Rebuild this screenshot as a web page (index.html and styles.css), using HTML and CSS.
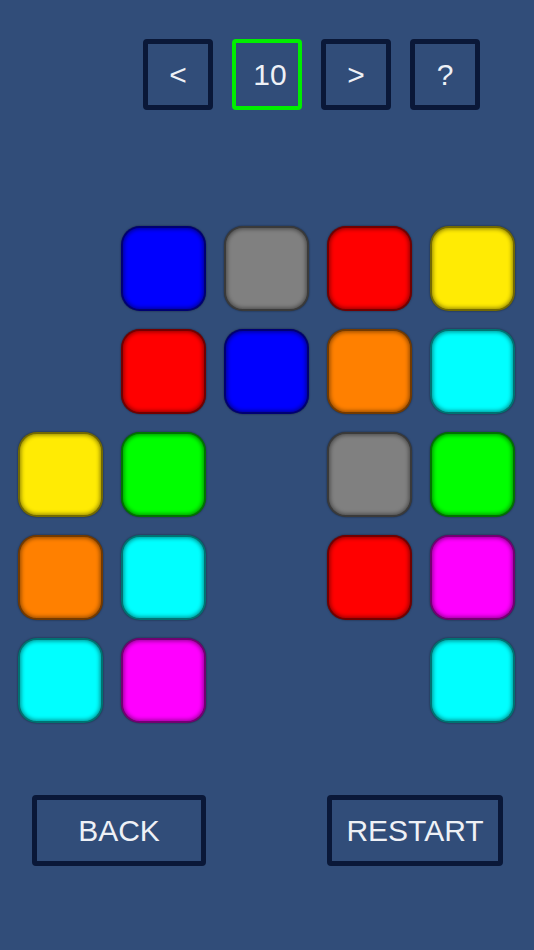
FILE: index.html
```html
<!DOCTYPE html>
<html>
<head>
<meta charset="utf-8">
<link rel="stylesheet" href="styles.css">
</head>
<body>
<div class="screen">
  <div class="topbar">
    <div class="btn sq">&lt;</div>
    <div class="btn sq level">10</div>
    <div class="btn sq">&gt;</div>
    <div class="btn sq">?</div>
  </div>
  <div class="board">
    <div class="cell"></div>
    <div class="cell t blue"></div>
    <div class="cell t gray"></div>
    <div class="cell t red"></div>
    <div class="cell t yellow"></div>

    <div class="cell"></div>
    <div class="cell t red"></div>
    <div class="cell t blue"></div>
    <div class="cell t orange"></div>
    <div class="cell t cyan"></div>

    <div class="cell t yellow"></div>
    <div class="cell t green"></div>
    <div class="cell"></div>
    <div class="cell t gray"></div>
    <div class="cell t green"></div>

    <div class="cell t orange"></div>
    <div class="cell t cyan"></div>
    <div class="cell"></div>
    <div class="cell t red"></div>
    <div class="cell t magenta"></div>

    <div class="cell t cyan"></div>
    <div class="cell t magenta"></div>
    <div class="cell"></div>
    <div class="cell"></div>
    <div class="cell t cyan"></div>
  </div>
  <div class="bottombar">
    <div class="btn wide back">BACK</div>
    <div class="btn wide restart">RESTART</div>
  </div>
</div>
</body>
</html>
```

FILE: styles.css
```css
html, body {
  margin: 0;
  padding: 0;
  background: #314d79;
}
body {
  width: 534px;
  height: 950px;
  overflow: hidden;
  font-family: "Liberation Sans", Arial, sans-serif;
  color: #eef1f6;
}
.screen {
  display: flex;
  flex-direction: column;
}
.topbar {
  display: flex;
  gap: 19px;
  padding-left: 143px;
  margin-top: 39px;
}
.btn {
  box-sizing: border-box;
  border: 5px solid #0a1838;
  border-radius: 4px;
  display: flex;
  align-items: center;
  justify-content: center;
  font-size: 30px;
  line-height: 1;
}
.sq {
  width: 70px;
  height: 71px;
}
.level {
  border-color: #00ee00;
  border-width: 4px;
  padding-left: 6px;
}
.board {
  display: grid;
  grid-template-columns: repeat(5, 85px);
  grid-auto-rows: 85px;
  column-gap: 18px;
  row-gap: 18px;
  padding-left: 18px;
  margin-top: 116px;
}
.t {
  box-sizing: border-box;
  border-radius: 19px;
  border: 2px solid rgba(0, 0, 0, 0.55);
  box-shadow: inset 0 0 4px 1px rgba(0, 0, 0, 0.45), 0 0 2px rgba(0, 0, 0, 0.55);
}
.blue { background: #0000ff; }
.gray { background: #808080; }
.red { background: #ff0000; }
.yellow { background: #ffeb04; }
.orange { background: #ff8000; }
.cyan { background: #00ffff; }
.green { background: #00ff00; }
.magenta { background: #ff00ff; }
.bottombar {
  display: flex;
  justify-content: space-between;
  padding: 0 31px 0 32px;
  margin-top: 72px;
}
.wide {
  height: 71px;
}
.back { width: 174px; }
.restart { width: 176px; }
```
